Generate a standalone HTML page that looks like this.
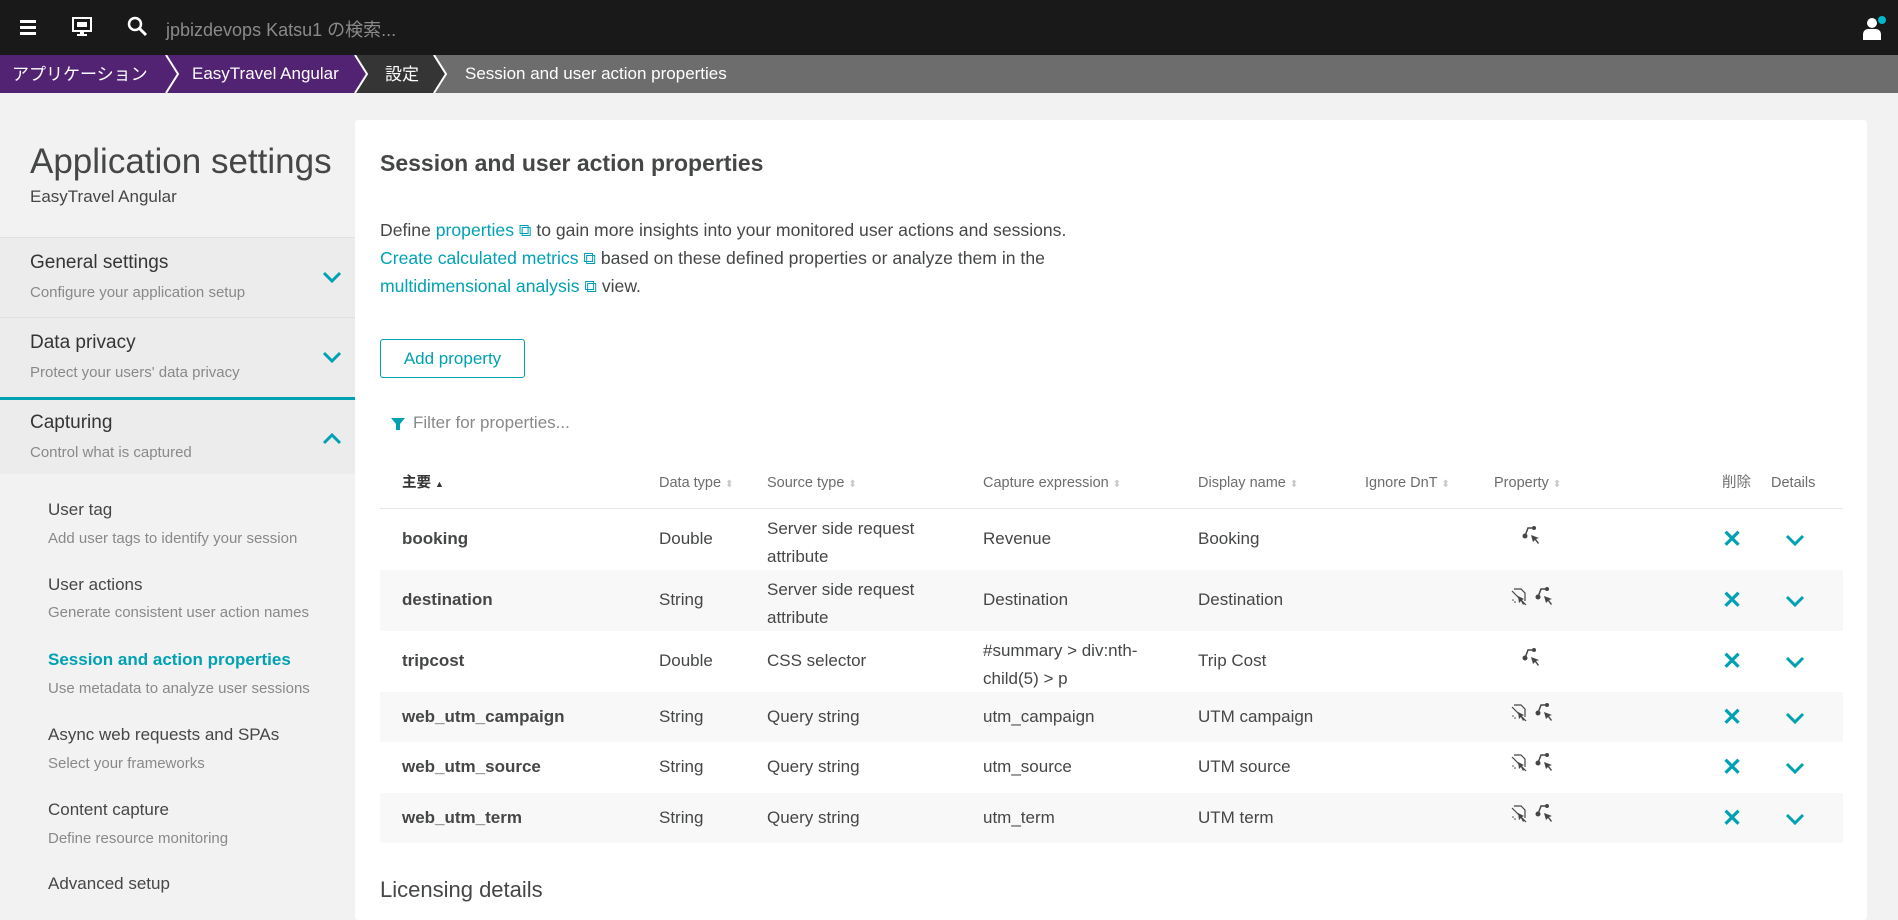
<!DOCTYPE html>
<html><head><meta charset="utf-8"><style>
*{margin:0;padding:0;box-sizing:border-box}
body{width:1898px;height:892px;overflow:hidden;background:#f2f2f2;font-family:"Liberation Sans","Noto Sans CJK JP",sans-serif;color:#454646;position:relative}
.a{position:absolute;white-space:nowrap}
.top{left:0;top:0;width:1898px;height:55px;background:#191919}
.bc{left:0;top:55px;width:1898px;height:38px;background:#6d6d6d;color:#fff;font-size:17px}
.bc .a{line-height:20px;top:9px}
.sec{position:absolute;left:0;width:355px;background:#ececec;border-top:1px solid #e0e0e0}
.sec .t{position:absolute;left:30px;font-size:19px;color:#353535}
.sec .d{position:absolute;left:30px;font-size:15px;color:#898989}
.sub{position:absolute;left:48px;font-size:17px;color:#454646;white-space:nowrap}
.subd{position:absolute;left:48px;font-size:15px;color:#898989;white-space:nowrap}
.card{left:355px;top:120px;width:1512px;height:800px;background:#fff;border-radius:3px}
.lnk{color:#00a1b2}
.th{font-size:14.5px;color:#6d6d6d;top:474px;line-height:18px}
.row{position:absolute;left:380px;width:1463px}
.cell{position:absolute;font-size:17px;color:#454646;white-space:nowrap}
.x{position:absolute;left:1342px;font-size:24px;color:#00a1b2;font-weight:bold}
.sort{color:#c8c8c8;font-size:10px}
</style></head><body>
<div class="a top">
 <svg class="a" style="left:20px;top:19px" width="16" height="16"><rect y="1" width="16" height="3" fill="#fff"/><rect y="7" width="16" height="3" fill="#fff"/><rect y="13" width="16" height="3" fill="#fff"/></svg>
 <svg class="a" style="left:72px;top:17px" width="20" height="20"><rect x="1" y="1" width="18" height="13" fill="none" stroke="#fff" stroke-width="2"/><rect x="5" y="5" width="10" height="5" fill="#fff"/><rect x="8" y="14" width="4" height="3" fill="#fff"/><rect x="5" y="17" width="10" height="2" fill="#fff"/></svg>
 <svg class="a" style="left:127px;top:16px" width="22" height="22"><circle cx="8" cy="8" r="6" fill="none" stroke="#fff" stroke-width="2.5"/><path d="M12 12l7 7" stroke="#fff" stroke-width="3"/></svg>
 <div class="a" style="left:166px;top:16px;font-size:18px;color:#8a8a8a">jpbizdevops Katsu1 の検索...</div>
 <svg class="a" style="left:1860px;top:14px" width="28" height="28"><circle cx="12" cy="9" r="5" fill="#fff"/><path d="M3 26v-6a5 5 0 0 1 5-5h8a5 5 0 0 1 5 5v6z" fill="#fff"/><circle cx="22" cy="6" r="4" fill="#00b9cc"/></svg>
</div>
<div class="a bc">
 <svg class="a" style="left:0;top:0" width="460" height="38"><polygon points="0,0 354,0 366,19 354,38 0,38" fill="#522273"/><polygon points="354,0 433,0 445,19 433,38 354,38 366,19" fill="#353535"/><polyline points="166,0 178,19 166,38" fill="none" stroke="#fff" stroke-width="2"/><polyline points="355,0 367,19 355,38" fill="none" stroke="#fff" stroke-width="2"/><polyline points="434,0 446,19 434,38" fill="none" stroke="#fff" stroke-width="2"/></svg>
 <div class="a" style="left:12px;top:10px">アプリケーション</div>
 <div class="a" style="left:192px">EasyTravel Angular</div>
 <div class="a" style="left:385px;top:10px">設定</div>
 <div class="a" style="left:465px">Session and user action properties</div>
</div>
<div class="a" style="left:30px;top:142px;font-size:35px;color:#454646">Application settings</div>
<div class="a" style="left:30px;top:187px;font-size:17px;color:#454646">EasyTravel Angular</div>
<div class="sec" style="top:237px;height:80px"><div class="t" style="top:14px">General settings</div><div class="d" style="top:46px">Configure your application setup</div>
<svg class="a" style="left:322px;top:33px" width="20" height="14"><path d="M2 2l8 8 8-8" fill="none" stroke="#00a1b2" stroke-width="3"/></svg></div>
<div class="sec" style="top:317px;height:80px"><div class="t" style="top:14px">Data privacy</div><div class="d" style="top:46px">Protect your users' data privacy</div>
<svg class="a" style="left:322px;top:33px" width="20" height="14"><path d="M2 2l8 8 8-8" fill="none" stroke="#00a1b2" stroke-width="3"/></svg></div>
<div class="sec" style="top:397px;height:77px;border-top:3px solid #00a1b2"><div class="t" style="top:12px">Capturing</div><div class="d" style="top:44px">Control what is captured</div>
<svg class="a" style="left:322px;top:31px" width="20" height="14"><path d="M2 12l8-8 8 8" fill="none" stroke="#00a1b2" stroke-width="3"/></svg></div>
<div class="sub" style="top:500px">User tag</div><div class="subd" style="top:530px">Add user tags to identify your session</div>
<div class="sub" style="top:575px">User actions</div><div class="subd" style="top:604px">Generate consistent user action names</div>
<div class="sub" style="top:650px;color:#00a1b2;font-weight:bold">Session and action properties</div><div class="subd" style="top:680px">Use metadata to analyze user sessions</div>
<div class="sub" style="top:725px">Async web requests and SPAs</div><div class="subd" style="top:755px">Select your frameworks</div>
<div class="sub" style="top:800px">Content capture</div><div class="subd" style="top:830px">Define resource monitoring</div>
<div class="sub" style="top:874px">Advanced setup</div>
<div class="a card"></div>
<div class="a" style="left:380px;top:150px;font-size:23px;font-weight:bold;color:#454646">Session and user action properties</div>
<div class="a" style="left:380px;top:216px;font-size:17.6px;line-height:28px;color:#454646">Define <span class="lnk">properties ⧉</span> to gain more insights into your monitored user actions and sessions.<br><span class="lnk">Create calculated metrics ⧉</span> based on these defined properties or analyze them in the<br><span class="lnk">multidimensional analysis ⧉</span> view.</div>
<div class="a" style="left:380px;top:339px;width:145px;height:39px;border:1px solid #00a1b2;border-radius:3px;color:#00a1b2;font-size:17px;text-align:center;line-height:37px">Add property</div>
<svg class="a" style="left:391px;top:417px" width="14" height="14"><path d="M0 1h14l-5 6v6h-4v-6z" fill="#00a1b2"/></svg>
<div class="a" style="left:413px;top:413px;font-size:17px;color:#898989">Filter for properties...</div>
<div class="a th" style="left:402px;color:#353535;font-weight:bold">主要 <span style="font-size:9px">▲</span></div>
<div class="a th" style="left:659px">Data type <span class="sort">⬍</span></div>
<div class="a th" style="left:767px">Source type <span class="sort">⬍</span></div>
<div class="a th" style="left:983px">Capture expression <span class="sort">⬍</span></div>
<div class="a th" style="left:1198px">Display name <span class="sort">⬍</span></div>
<div class="a th" style="left:1365px">Ignore DnT <span class="sort">⬍</span></div>
<div class="a th" style="left:1494px">Property <span class="sort">⬍</span></div>
<div class="a th" style="left:1722px">削除</div>
<div class="a th" style="left:1771px">Details</div>
<div class="a" style="left:380px;top:508px;width:1463px;height:2px;background:#e6e6e6"></div>

<svg width="0" height="0" style="position:absolute"><defs>
<g id="ua"><circle cx="3" cy="10" r="2.5" fill="#454646"/><circle cx="12" cy="2" r="2" fill="#454646"/><path d="M12 2H6L3 10" fill="none" stroke="#454646" stroke-width="1.5"/><path d="M9 9l8 3-3 1 3 4-1 1-3-4-2 2z" fill="#454646"/></g>
<g id="dnt"><path d="M3 1h7l4 4v8" fill="none" stroke="#454646" stroke-width="1.2"/><path d="M1 3l14 14" stroke="#454646" stroke-width="1.2"/><path d="M7 8l6 3-2 1 2 4-1 1-2-4-2 2z" fill="#454646"/><circle cx="2" cy="12" r="0.8" fill="#454646"/><circle cx="4" cy="14" r="0.8" fill="#454646"/></g>
</defs></svg>

<div class="row" style="top:509px;height:61px;background:#fff">
<div class="cell" style="left:22px;top:20px;font-weight:bold">booking</div>
<div class="cell" style="left:279px;top:20px">Double</div>
<div class="cell" style="left:387px;top:6px;line-height:28px">Server side request<br>attribute</div>
<div class="cell" style="left:603px;top:20px">Revenue</div>
<div class="cell" style="left:818px;top:20px">Booking</div>
<svg class="a" style="left:1142px;top:17px" width="20" height="20"><use href="#ua"/></svg>
<div class="x" style="top:16px">✕</div>
<svg class="a" style="left:1405px;top:25px" width="20" height="14"><path d="M2 2l8 8 8-8" fill="none" stroke="#00a1b2" stroke-width="3"/></svg>
</div>
<div class="row" style="top:570px;height:61px;background:#f8f8f8">
<div class="cell" style="left:22px;top:20px;font-weight:bold">destination</div>
<div class="cell" style="left:279px;top:20px">String</div>
<div class="cell" style="left:387px;top:6px;line-height:28px">Server side request<br>attribute</div>
<div class="cell" style="left:603px;top:20px">Destination</div>
<div class="cell" style="left:818px;top:20px">Destination</div>
<svg class="a" style="left:1131px;top:18px" width="18" height="20"><use href="#dnt"/></svg>
<svg class="a" style="left:1155px;top:17px" width="20" height="20"><use href="#ua"/></svg>
<div class="x" style="top:16px">✕</div>
<svg class="a" style="left:1405px;top:25px" width="20" height="14"><path d="M2 2l8 8 8-8" fill="none" stroke="#00a1b2" stroke-width="3"/></svg>
</div>
<div class="row" style="top:631px;height:61px;background:#fff">
<div class="cell" style="left:22px;top:20px;font-weight:bold">tripcost</div>
<div class="cell" style="left:279px;top:20px">Double</div>
<div class="cell" style="left:387px;top:20px">CSS selector</div>
<div class="cell" style="left:603px;top:6px;line-height:28px">#summary &gt; div:nth-<br>child(5) &gt; p</div>
<div class="cell" style="left:818px;top:20px">Trip Cost</div>
<svg class="a" style="left:1142px;top:17px" width="20" height="20"><use href="#ua"/></svg>
<div class="x" style="top:16px">✕</div>
<svg class="a" style="left:1405px;top:25px" width="20" height="14"><path d="M2 2l8 8 8-8" fill="none" stroke="#00a1b2" stroke-width="3"/></svg>
</div>
<div class="row" style="top:692px;height:50px;background:#f8f8f8">
<div class="cell" style="left:22px;top:15px;font-weight:bold">web_utm_campaign</div>
<div class="cell" style="left:279px;top:15px">String</div>
<div class="cell" style="left:387px;top:15px">Query string</div>
<div class="cell" style="left:603px;top:15px">utm_campaign</div>
<div class="cell" style="left:818px;top:15px">UTM campaign</div>
<svg class="a" style="left:1131px;top:12px" width="18" height="20"><use href="#dnt"/></svg>
<svg class="a" style="left:1155px;top:11px" width="20" height="20"><use href="#ua"/></svg>
<div class="x" style="top:11px">✕</div>
<svg class="a" style="left:1405px;top:20px" width="20" height="14"><path d="M2 2l8 8 8-8" fill="none" stroke="#00a1b2" stroke-width="3"/></svg>
</div>
<div class="row" style="top:742px;height:51px;background:#fff">
<div class="cell" style="left:22px;top:15px;font-weight:bold">web_utm_source</div>
<div class="cell" style="left:279px;top:15px">String</div>
<div class="cell" style="left:387px;top:15px">Query string</div>
<div class="cell" style="left:603px;top:15px">utm_source</div>
<div class="cell" style="left:818px;top:15px">UTM source</div>
<svg class="a" style="left:1131px;top:12px" width="18" height="20"><use href="#dnt"/></svg>
<svg class="a" style="left:1155px;top:11px" width="20" height="20"><use href="#ua"/></svg>
<div class="x" style="top:11px">✕</div>
<svg class="a" style="left:1405px;top:20px" width="20" height="14"><path d="M2 2l8 8 8-8" fill="none" stroke="#00a1b2" stroke-width="3"/></svg>
</div>
<div class="row" style="top:793px;height:50px;background:#f8f8f8">
<div class="cell" style="left:22px;top:15px;font-weight:bold">web_utm_term</div>
<div class="cell" style="left:279px;top:15px">String</div>
<div class="cell" style="left:387px;top:15px">Query string</div>
<div class="cell" style="left:603px;top:15px">utm_term</div>
<div class="cell" style="left:818px;top:15px">UTM term</div>
<svg class="a" style="left:1131px;top:12px" width="18" height="20"><use href="#dnt"/></svg>
<svg class="a" style="left:1155px;top:11px" width="20" height="20"><use href="#ua"/></svg>
<div class="x" style="top:11px">✕</div>
<svg class="a" style="left:1405px;top:20px" width="20" height="14"><path d="M2 2l8 8 8-8" fill="none" stroke="#00a1b2" stroke-width="3"/></svg>
</div>
<div class="a" style="left:380px;top:877px;font-size:22px;color:#454646">Licensing details</div>
</body></html>
